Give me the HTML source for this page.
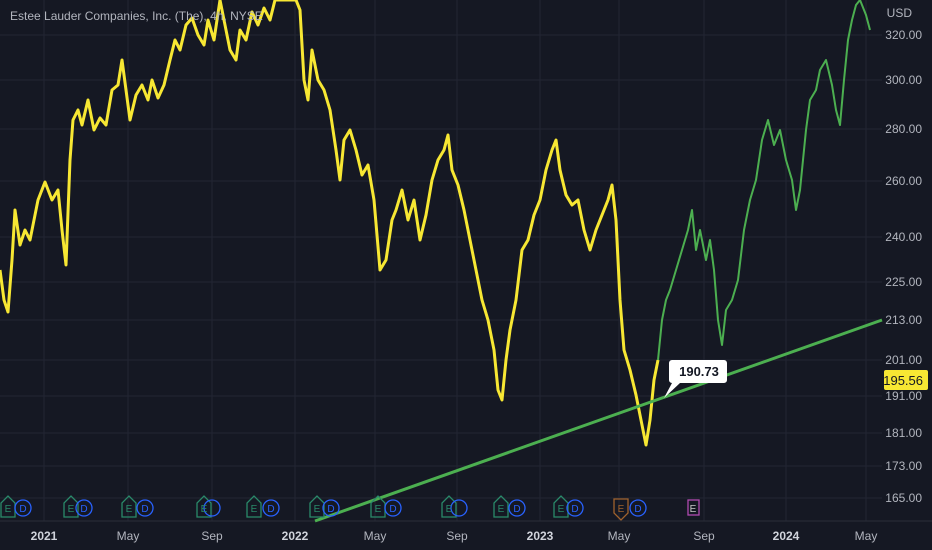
<!DOCTYPE html>
<html><head><style>
html,body{margin:0;padding:0;background:#151823;width:932px;height:550px;overflow:hidden;font-family:"Liberation Sans",sans-serif}
svg{display:block}
</style></head><body>
<svg width="932" height="550" viewBox="0 0 932 550" xmlns="http://www.w3.org/2000/svg">
<rect width="932" height="550" fill="#151823"/>
<g stroke="#222633" stroke-width="1">
<line x1="44" y1="0" x2="44" y2="521"/><line x1="128" y1="0" x2="128" y2="521"/><line x1="212" y1="0" x2="212" y2="521"/><line x1="295" y1="0" x2="295" y2="521"/><line x1="375" y1="0" x2="375" y2="521"/><line x1="457" y1="0" x2="457" y2="521"/><line x1="540" y1="0" x2="540" y2="521"/><line x1="619" y1="0" x2="619" y2="521"/><line x1="704" y1="0" x2="704" y2="521"/><line x1="786" y1="0" x2="786" y2="521"/><line x1="866" y1="0" x2="866" y2="521"/>
<line x1="0" y1="35" x2="882" y2="35"/><line x1="0" y1="80" x2="882" y2="80"/><line x1="0" y1="129" x2="882" y2="129"/><line x1="0" y1="181" x2="882" y2="181"/><line x1="0" y1="237" x2="882" y2="237"/><line x1="0" y1="282" x2="882" y2="282"/><line x1="0" y1="320" x2="882" y2="320"/><line x1="0" y1="360" x2="882" y2="360"/><line x1="0" y1="396" x2="882" y2="396"/><line x1="0" y1="433" x2="882" y2="433"/><line x1="0" y1="466" x2="882" y2="466"/><line x1="0" y1="498" x2="882" y2="498"/>
</g>
<line x1="0" y1="521" x2="932" y2="521" stroke="#2a2e39"/>
<polyline fill="none" stroke="#f7e733" stroke-width="3" stroke-linejoin="round" points="0,270 4,300 8,312 12,260 15,210 20,245 25,230 30,240 38,200 45,182 52,200 58,190 62,230 66,265 70,160 73,120 78,110 82,125 88,100 94,130 100,118 106,125 112,90 118,85 122,60 126,90 130,120 136,95 142,85 148,100 152,80 158,98 164,85 170,60 175,40 180,50 186,25 192,18 198,35 204,45 208,20 214,40 220,0 226,30 230,50 236,60 240,30 246,40 252,12 258,25 264,8 270,20 275,0 296,0 300,10 304,80 308,100 312,50 318,80 324,90 330,110 336,150 340,180 344,140 350,130 356,150 362,175 368,165 374,200 380,270 386,260 392,220 396,210 402,190 408,220 414,200 420,240 426,215 432,180 438,160 444,150 448,135 452,170 458,185 464,210 470,240 476,270 482,300 488,320 494,350 498,390 502,400 506,360 510,330 516,300 522,250 528,240 534,215 540,200 546,170 552,150 556,140 560,170 566,195 572,205 578,200 584,230 590,250 596,230 602,215 608,200 612,185 616,220 620,300 624,350 630,370 636,395 640,415 646,445 650,420 654,380 658,360"/>
<polyline fill="none" stroke="#4caf50" stroke-width="2" stroke-linejoin="round" points="658,360 662,320 666,300 670,290 676,270 682,250 688,230 692,210 696,250 700,230 706,260 710,240 714,270 718,320 722,345 726,310 732,300 738,280 744,230 750,200 756,180 762,140 768,120 774,145 780,130 786,160 792,180 796,210 800,190 806,130 810,100 816,90 820,70 826,60 832,85 836,110 840,125 844,80 848,40 852,20 856,5 860,0 866,15 870,30"/>
<line x1="315" y1="521" x2="882" y2="320" stroke="#4caf50" stroke-width="3"/>
<path d="M672,360 h52 a3,3 0 0 1 3,3 v17 a3,3 0 0 1 -3,3 h-44 l-16,15 l8,-15 h0 a3,3 0 0 1 -3,-3 v-17 a3,3 0 0 1 3,-3 z" fill="#fff"/>
<text x="699" y="376" text-anchor="middle" font-size="13" font-weight="bold" fill="#131722">190.73</text>
<text x="10" y="20" font-size="12" fill="#b2b5be">Estee Lauder Companies, Inc. (The), 4h, NYSE</text>
<g font-size="12" fill="#b2b5be" text-anchor="end">
<text x="912" y="17">USD</text><text x="922" y="39">320.00</text><text x="922" y="84">300.00</text><text x="922" y="133">280.00</text><text x="922" y="185">260.00</text><text x="922" y="241">240.00</text><text x="922" y="286">225.00</text><text x="922" y="324">213.00</text><text x="922" y="364">201.00</text><text x="922" y="400">191.00</text><text x="922" y="437">181.00</text><text x="922" y="470">173.00</text><text x="922" y="502">165.00</text>
</g>
<rect x="884" y="370" width="44" height="20" rx="2" fill="#f7e733"/>
<text x="923" y="385" font-size="13" fill="#131722" text-anchor="end">195.56</text>
<g font-size="12" fill="#b2b5be" text-anchor="middle">
<text x="44" y="540" font-weight="bold" fill="#d1d4dc">2021</text><text x="128" y="540">May</text><text x="212" y="540">Sep</text><text x="295" y="540" font-weight="bold" fill="#d1d4dc">2022</text><text x="375" y="540">May</text><text x="457" y="540">Sep</text><text x="540" y="540" font-weight="bold" fill="#d1d4dc">2023</text><text x="619" y="540">May</text><text x="704" y="540">Sep</text><text x="786" y="540" font-weight="bold" fill="#d1d4dc">2024</text><text x="866" y="540">May</text>
</g>
<g font-size="10" text-anchor="middle" stroke-width="1.3" fill="none">
<g stroke="#2a8a6a">
<path d="M1,517 v-14 l7,-7 l7,7 v14 z"/><path d="M64,517 v-14 l7,-7 l7,7 v14 z"/><path d="M122,517 v-14 l7,-7 l7,7 v14 z"/><path d="M197,517 v-14 l7,-7 l7,7 v14 z"/><path d="M247,517 v-14 l7,-7 l7,7 v14 z"/><path d="M310,517 v-14 l7,-7 l7,7 v14 z"/><path d="M371,517 v-14 l7,-7 l7,7 v14 z"/><path d="M442,517 v-14 l7,-7 l7,7 v14 z"/><path d="M494,517 v-14 l7,-7 l7,7 v14 z"/><path d="M554,517 v-14 l7,-7 l7,7 v14 z"/>
</g>
<path d="M614,499 h14 v14 l-7,7 l-7,-7 z" stroke="#a0622d"/>
<rect x="688" y="500" width="11" height="15" stroke="#b04bb0"/>
<g stroke="#2962ff">
<circle cx="23" cy="508" r="8"/><circle cx="84" cy="508" r="8"/><circle cx="145" cy="508" r="8"/><circle cx="212" cy="508" r="8"/><circle cx="271" cy="508" r="8"/><circle cx="331" cy="508" r="8"/><circle cx="393" cy="508" r="8"/><circle cx="459" cy="508" r="8"/><circle cx="517" cy="508" r="8"/><circle cx="575" cy="508" r="8"/><circle cx="638" cy="508" r="8"/>
</g>
<g fill="#2a8a6a" stroke="none"><text x="8" y="512">E</text><text x="71" y="512">E</text><text x="129" y="512">E</text><text x="204" y="512">E</text><text x="254" y="512">E</text><text x="317" y="512">E</text><text x="378" y="512">E</text><text x="449" y="512">E</text><text x="501" y="512">E</text><text x="561" y="512">E</text></g>
<text x="621" y="512" fill="#a0622d" stroke="none">E</text>
<text x="693" y="512" fill="#c7c7c7" stroke="none">E</text>
<g fill="#2962ff" stroke="none"><text x="23" y="512">D</text><text x="84" y="512">D</text><text x="145" y="512">D</text><text x="271" y="512">D</text><text x="331" y="512">D</text><text x="393" y="512">D</text><text x="517" y="512">D</text><text x="575" y="512">D</text><text x="638" y="512">D</text></g>
</g>
</svg>
</body></html>
